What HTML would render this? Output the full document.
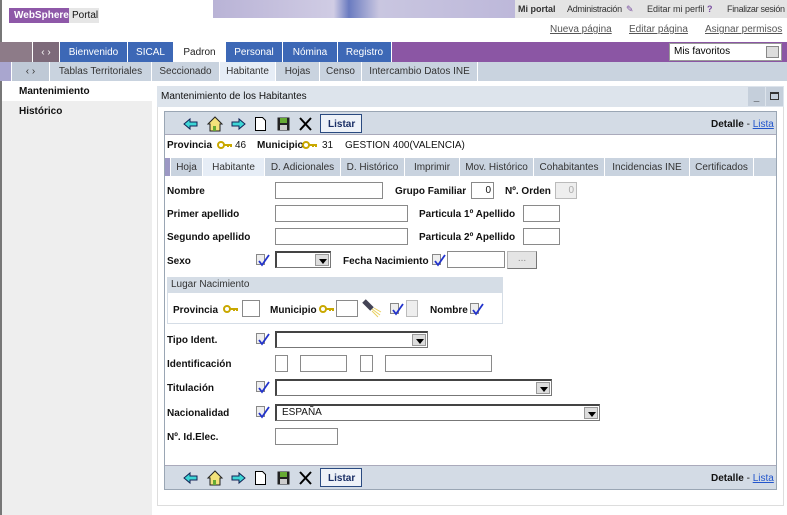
<!DOCTYPE html>
<html><head><meta charset="utf-8"><style>
*{margin:0;padding:0;box-sizing:border-box}
body{width:787px;height:515px;position:relative;background:#fff;font-family:"Liberation Sans",sans-serif;font-size:10px;color:#111;overflow:hidden}
.a{position:absolute;white-space:nowrap}
.b{font-weight:bold}
.a.b{margin-top:2px}
.t{position:absolute;top:0;height:100%;display:flex;align-items:center;justify-content:center;border-right:1px solid #fff;white-space:nowrap}
.in{position:absolute;border:1px solid #8a8a8a;background:#fff;height:17px}
.sel{position:absolute;border:1px solid #777;border-top:2px solid #444;border-left:2px solid #444;background:#fff;height:17px}
.sel i{position:absolute;right:1px;top:1px;width:14px;height:12px;background:#ddd;border:1px solid #999}
.sel i:after{content:"";position:absolute;left:3px;top:4px;border-left:4px solid transparent;border-right:4px solid transparent;border-top:5px solid #000}
.chk{position:absolute;width:15px;height:14px}
</style></head><body>
<div class="a" style="left:0;top:0;width:2px;height:515px;background:#777"></div>
<div class="a" style="left:9px;top:8px;width:60px;height:15px;background:#8e58a8;color:#fff;font:bold 10px 'Liberation Sans',sans-serif;line-height:15px;padding-left:5px">WebSphere</div>
<div class="a" style="left:69px;top:8px;width:30px;height:15px;background:#e6e6e6;font:10px 'Liberation Sans',sans-serif;line-height:15px;padding-left:3px">Portal</div>
<div class="a" style="left:213px;top:0;width:302px;height:18px;background:linear-gradient(90deg,#b9b3d6 0%,#d0cce4 40%,#6a7bc0 45%,#c9c6e0 55%,#bdb8da 100%)"></div>
<div class="a" style="left:515px;top:0;width:272px;height:18px;background:#e4e4e4;font:9px 'Liberation Sans',sans-serif;color:#333;line-height:18px">
<span class="a" style="left:3px;font-weight:bold">Mi portal</span><span class="a" style="left:52px;letter-spacing:-0.3px">Administración</span><span class="a" style="left:111px;color:#7a4fa0">✎</span><span class="a" style="left:132px">Editar mi perfil</span><span class="a" style="left:192px;color:#7a4fa0;font-weight:bold">?</span><span class="a" style="left:212px;letter-spacing:-0.3px">Finalizar sesión</span></div>
<div class="a" style="top:24px;left:550px;font:10px 'Liberation Sans',sans-serif;color:#555;text-decoration:underline">Nueva página</div>
<div class="a" style="top:24px;left:629px;font:10px 'Liberation Sans',sans-serif;color:#555;text-decoration:underline">Editar página</div>
<div class="a" style="top:24px;left:705px;font:10px 'Liberation Sans',sans-serif;color:#555;text-decoration:underline">Asignar permisos</div>
<div class="a" style="left:0;top:42px;width:787px;height:20px;background:#8b56a4;color:#fff;font-size:10px">
<div class="t" style="left:0;width:33px;background:#8d7b88"></div>
<div class="t" style="left:33px;width:27px;background:#7d6a7a">‹ ›</div>
<div class="t" style="left:60px;width:68px;background:#3d68b6">Bienvenido</div>
<div class="t" style="left:128px;width:46px;background:#3d68b6">SICAL</div>
<div class="t" style="left:174px;width:52px;background:#fff;color:#222">Padron</div>
<div class="t" style="left:226px;width:57px;background:#3d68b6">Personal</div>
<div class="t" style="left:283px;width:55px;background:#3d68b6">Nómina</div>
<div class="t" style="left:338px;width:54px;background:#3d68b6">Registro</div>
<div class="a" style="left:669px;top:1px;width:113px;height:18px;background:#fff;border:1px solid #999;color:#000;line-height:16px;padding-left:4px">Mis favoritos<span style="position:absolute;right:2px;top:2px;width:13px;height:12px;background:#ddd;border:1px solid #888"></span></div>
</div>
<div class="a" style="left:0;top:62px;width:787px;height:19px;background:#c9d3df;color:#333;font-size:10px">
<div class="t" style="left:0;width:12px;background:#a9a6cf"></div>
<div class="t" style="left:12px;width:38px;background:#bfc9d6">‹ ›</div>
<div class="t" style="left:50px;width:102px">Tablas Territoriales</div>
<div class="t" style="left:152px;width:68px">Seccionado</div>
<div class="t" style="left:220px;width:56px;background:#e6edf6">Habitante</div>
<div class="t" style="left:276px;width:44px">Hojas</div>
<div class="t" style="left:320px;width:42px">Censo</div>
<div class="t" style="left:362px;width:116px">Intercambio Datos INE</div>
</div>
<div class="a b" style="left:19px;top:84px">Mantenimiento</div>
<div class="a" style="left:2px;top:101px;width:150px;height:414px;background:#eee"></div>
<div class="a b" style="left:19px;top:104px">Histórico</div>
<div class="a" style="left:157px;top:86px;width:627px;height:420px;border:1px solid #ddd"></div>
<div class="a" style="left:157px;top:86px;width:627px;height:21px;background:#dde4ec;line-height:21px;padding-left:4px">Mantenimiento de los Habitantes</div>
<div class="a" style="left:748px;top:87px;width:17px;height:19px;background:#c5cfdb;text-align:center;font-weight:bold;line-height:22px">_</div>
<div class="a" style="left:766px;top:87px;width:17px;height:19px;background:#c5cfdb"><div style="margin:5px 4px;width:9px;height:8px;border:1px solid #333;border-top-width:2px"></div></div>
<div class="a" style="left:164px;top:111px;width:613px;height:379px;border:1px solid #9aa6b4"></div>
<div class="a" style="left:165px;top:112px;width:611px;height:23px;background:#d3dbe5;border-bottom:1px solid #aab"></div>
<div class="a" style="left:165px;top:465px;width:611px;height:24px;background:#d3dbe5;border-top:1px solid #aab"></div>
<svg class="a" style="left:165px;top:112px" width="611" height="23">
<g id="tools">
<path d="M19 12 l6-5 v3 h7 v4 h-7 v3z" fill="#3dd6d6" stroke="#125" stroke-width="1"/>
<path d="M43 12 l7-7 7 7 h-2 v7 h-10 v-7z" fill="#f3e27a" stroke="#222"/><rect x="48" y="14" width="3" height="5" fill="#6a3"/>
<path d="M80 12 l-6-5 v3 h-7 v4 h7 v3z" fill="#3dd6d6" stroke="#125"/>
<path d="M90.5 5.5 h7 l3 3 v10 h-10z" fill="#fff" stroke="#000"/>
<rect x="112.5" y="5.5" width="12" height="13" fill="#222"/><rect x="115" y="6" width="7" height="5" fill="#6a3"/><rect x="115" y="13" width="7" height="5" fill="#ccc"/>
<path d="M135 6 l11 12 M146 6 l-11 12" stroke="#000" stroke-width="2"/>
</g>
<rect x="155.5" y="2.5" width="41" height="18" fill="#eef2f8" stroke="#2a4a80"/>
<text x="163" y="15" font-family="Liberation Sans" font-size="10" font-weight="bold" fill="#1a2f66">Listar</text>
</svg>
<svg class="a" style="left:165px;top:466px" width="611" height="23">
<use href="#tools"/>
<rect x="155.5" y="2.5" width="41" height="18" fill="#eef2f8" stroke="#2a4a80"/>
<text x="163" y="15" font-family="Liberation Sans" font-size="10" font-weight="bold" fill="#1a2f66">Listar</text>
</svg>
<div class="a" style="left:711px;top:119px;font-size:10px"><b>Detalle</b> - <span style="color:#2255cc;text-decoration:underline">Lista</span></div>
<div class="a" style="left:711px;top:473px;font-size:10px"><b>Detalle</b> - <span style="color:#2255cc;text-decoration:underline">Lista</span></div>
<svg width="0" height="0" style="position:absolute"><defs><g id="key"><circle cx="4" cy="4" r="3" fill="none" stroke="#c9a800" stroke-width="2"/><path d="M7 4 h8 M11 4 v2 M14 4 v2" stroke="#c9a800" stroke-width="2"/></g>
<g id="chk"><rect x="1.5" y="1.5" width="8" height="10" fill="#eee" stroke="#888"/><path d="M4 8 l3 4 l7-10" fill="none" stroke="#2233cc" stroke-width="1.8"/></g></defs></svg>
<div class="a b" style="left:167px;top:138px">Provincia</div>
<svg class="a" style="left:217px;top:141px" width="16" height="9"><use href="#key"/></svg>
<div class="a" style="left:235px;top:140px">46</div>
<div class="a b" style="left:257px;top:138px">Municipio</div>
<svg class="a" style="left:302px;top:141px" width="16" height="9"><use href="#key"/></svg>
<div class="a" style="left:322px;top:140px">31</div>
<div class="a" style="left:345px;top:140px">GESTION 400(VALENCIA)</div>
<div class="a" style="left:165px;top:158px;width:611px;height:18px;background:#c9d3df;color:#333">
<div class="t" style="left:0;width:6px;background:#9c98c4"></div>
<div class="t" style="left:6px;width:32px">Hoja</div>
<div class="t" style="left:38px;width:62px;background:#e6edf6">Habitante</div>
<div class="t" style="left:100px;width:76px">D. Adicionales</div>
<div class="t" style="left:176px;width:64px">D. Histórico</div>
<div class="t" style="left:240px;width:55px">Imprimir</div>
<div class="t" style="left:295px;width:74px">Mov. Histórico</div>
<div class="t" style="left:369px;width:71px">Cohabitantes</div>
<div class="t" style="left:440px;width:85px">Incidencias INE</div>
<div class="t" style="left:525px;width:64px">Certificados</div>
</div>
<div class="a b" style="left:167px;top:184px">Nombre</div>
<div class="in" style="left:275px;top:182px;width:108px"></div>
<div class="a b" style="left:395px;top:184px">Grupo Familiar</div>
<div class="in" style="left:471px;top:182px;width:23px;text-align:right;padding-right:2px;line-height:15px">0</div>
<div class="a b" style="left:505px;top:184px">Nº. Orden</div>
<div class="in" style="left:555px;top:182px;width:22px;background:#eee;color:#aaa;text-align:right;padding-right:2px;border-color:#bbb;line-height:15px">0</div>
<div class="a b" style="left:167px;top:207px">Primer apellido</div>
<div class="in" style="left:275px;top:205px;width:133px"></div>
<div class="a b" style="left:419px;top:207px">Particula 1º Apellido</div>
<div class="in" style="left:523px;top:205px;width:37px"></div>
<div class="a b" style="left:167px;top:230px">Segundo apellido</div>
<div class="in" style="left:275px;top:228px;width:133px"></div>
<div class="a b" style="left:419px;top:230px">Particula 2º Apellido</div>
<div class="in" style="left:523px;top:228px;width:37px"></div>
<div class="a b" style="left:167px;top:254px">Sexo</div>
<svg class="chk" style="left:255px;top:253px"><use href="#chk"/></svg>
<div class="sel" style="left:275px;top:251px;width:56px"><i></i></div>
<div class="a b" style="left:343px;top:254px">Fecha Nacimiento</div>
<svg class="chk" style="left:431px;top:253px"><use href="#chk"/></svg>
<div class="in" style="left:447px;top:251px;width:58px"></div>
<div class="a" style="left:507px;top:251px;width:30px;height:18px;background:#e4e4e4;border:1px solid #bbb;border-right-color:#777;border-bottom-color:#777;text-align:center;color:#888;line-height:14px">...</div>
<div class="a" style="left:167px;top:277px;width:336px;height:47px;border:1px solid #d5dde6"></div>
<div class="a" style="left:167px;top:277px;width:336px;height:16px;background:#d5dde6;padding-left:4px;line-height:16px;color:#333">Lugar Nacimiento</div>
<div class="a b" style="left:173px;top:303px">Provincia</div>
<svg class="a" style="left:223px;top:305px" width="16" height="9"><use href="#key"/></svg>
<div class="in" style="left:242px;top:300px;width:18px"></div>
<div class="a b" style="left:270px;top:303px">Municipio</div>
<svg class="a" style="left:319px;top:305px" width="16" height="9"><use href="#key"/></svg>
<div class="in" style="left:336px;top:300px;width:22px"></div>
<svg class="a" style="left:362px;top:299px" width="20" height="20"><path d="M2 2 l8 8" stroke="#445" stroke-width="5"/><path d="M10 10 l8 6 M10 12 l6 6 M12 9 l7 4" stroke="#e8d060" stroke-width="1"/></svg>
<svg class="chk" style="left:389px;top:302px"><use href="#chk"/></svg>
<div class="in" style="left:406px;top:300px;width:12px;background:#eee;border-color:#bbb"></div>
<div class="a b" style="left:430px;top:303px">Nombre</div>
<svg class="chk" style="left:469px;top:302px"><use href="#chk"/></svg>
<div class="a b" style="left:167px;top:333px">Tipo Ident.</div>
<svg class="chk" style="left:255px;top:332px"><use href="#chk"/></svg>
<div class="sel" style="left:275px;top:331px;width:153px"><i></i></div>
<div class="a b" style="left:167px;top:357px">Identificación</div>
<div class="in" style="left:275px;top:355px;width:13px"></div>
<div class="in" style="left:300px;top:355px;width:47px"></div>
<div class="in" style="left:360px;top:355px;width:13px"></div>
<div class="in" style="left:385px;top:355px;width:107px"></div>
<div class="a b" style="left:167px;top:381px">Titulación</div>
<svg class="chk" style="left:255px;top:380px"><use href="#chk"/></svg>
<div class="sel" style="left:275px;top:379px;width:277px"><i></i></div>
<div class="a b" style="left:167px;top:406px">Nacionalidad</div>
<svg class="chk" style="left:255px;top:405px"><use href="#chk"/></svg>
<div class="sel" style="left:275px;top:404px;width:325px;padding-left:5px;line-height:14px">ESPAÑA<i></i></div>
<div class="a b" style="left:167px;top:430px">Nº. Id.Elec.</div>
<div class="in" style="left:275px;top:428px;width:63px"></div>
</body></html>
